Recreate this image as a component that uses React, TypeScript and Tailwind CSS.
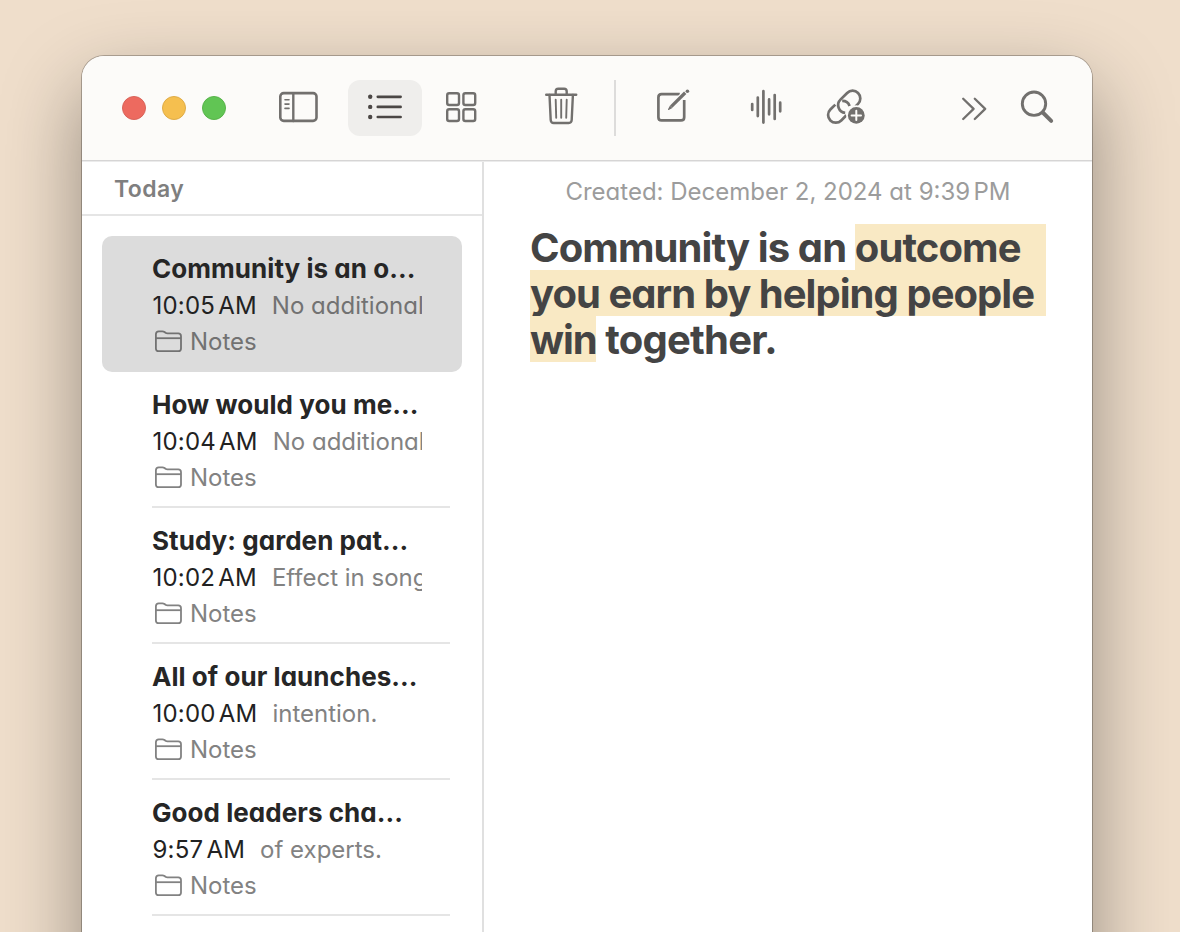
import { clsx } from "clsx"

interface Note {
  title: string
  time: string
  preview: string
}

const notes: Note[] = [
  { title: "Community is an o...", time: "10:05 AM", preview: "No additional text" },
  { title: "How would you me...", time: "10:04 AM", preview: "No additional text" },
  { title: "Study: garden pat...", time: "10:02 AM", preview: "Effect in songs" },
  { title: "All of our launches...", time: "10:00 AM", preview: "intention." },
  { title: "Good leaders cha...", time: "9:57 AM", preview: "of experts." },
]

function SidebarIcon() {
  return (
    <svg width="40" height="40" viewBox="0 0 40 40" fill="none" stroke="currentColor" strokeLinecap="round">
      <rect x="2.3" y="6.1" width="36.2" height="27.8" rx="3.4" strokeWidth="2.6" />
      <path d="M15.3 6.5V34" strokeWidth="2.4" />
      <path d="M7 12.8h4M7 17.1h4M7 21.4h4" strokeWidth="1.6" />
    </svg>
  )
}

function ListIcon() {
  return (
    <svg width="40" height="40" viewBox="0 0 40 40" fill="currentColor">
      <circle cx="5.2" cy="9.8" r="2.2" />
      <circle cx="5.2" cy="19.9" r="2.2" />
      <circle cx="5.2" cy="30" r="2.2" />
      <path d="M12.8 9.8h22.8M12.8 19.9h22.8M12.8 30h22.8" stroke="currentColor" strokeWidth="2.7" strokeLinecap="round" />
    </svg>
  )
}

function GridIcon() {
  return (
    <svg width="40" height="40" viewBox="0 0 40 40" fill="none" stroke="currentColor" strokeWidth="2.4">
      <rect x="6.2" y="6.2" width="11.8" height="11.8" rx="2" />
      <rect x="22.4" y="6.2" width="11.8" height="11.8" rx="2" />
      <rect x="6.2" y="22.2" width="11.8" height="11.8" rx="2" />
      <rect x="22.4" y="22.2" width="11.8" height="11.8" rx="2" />
    </svg>
  )
}

function TrashIcon() {
  return (
    <svg width="40" height="40" viewBox="0 0 40 40" fill="none" stroke="currentColor" strokeLinecap="round" strokeLinejoin="round">
      <path d="M5.2 7.7h30" strokeWidth="2.4" />
      <path d="M14.7 7.4v-3q0-2.6 2.6-2.6h5.8q2.6 0 2.6 2.6v3" strokeWidth="2.4" />
      <path d="M8.5 8l1.2 25q.2 3 3 3h15q2.8 0 3-3l1.2-25" strokeWidth="2.4" />
      <path d="M14.7 12.8l.5 18M20.2 12.8v18M25.7 12.8l-.5 18" strokeWidth="1.9" />
    </svg>
  )
}

function ComposeIcon() {
  return (
    <svg width="40" height="40" viewBox="0 0 40 40" fill="none" stroke="currentColor" strokeLinecap="butt" strokeLinejoin="round">
      <path d="M26.8 7.2H8.6q-3.2 0-3.2 3.2v19.8q0 3.2 3.2 3.2h19.4q3.2 0 3.2-3.2V13" strokeWidth="2.7" />
      <path d="M32.6 5.4L18.2 19.6" strokeWidth="5.6" stroke="#fcfbf9" />
      <path d="M32.2 5.8L18.2 19.6" strokeWidth="3.3" />
      <path d="M17 18.5l-2 3.7q-.2.9.7.7l3.7-2z" fill="currentColor" stroke="none" />
      <circle cx="34.4" cy="4.3" r="1.8" fill="currentColor" stroke="none" />
    </svg>
  )
}

function WaveformIcon() {
  return (
    <svg width="40" height="40" viewBox="0 0 40 40" fill="none" stroke="currentColor" strokeWidth="2.7" strokeLinecap="round">
      <path d="M6.2 17v6M11.8 10.5v18.6M17.4 4.2v31.4M23.1 12.4v14.9M28.7 8v23.9M34.2 15.7v8.6" />
    </svg>
  )
}

function LinkIcon() {
  return (
    <svg width="44" height="40" viewBox="0 0 44 40" fill="none" stroke="currentColor" strokeWidth="2.7" strokeLinecap="butt">
      <path d="M10.3 17.6L5.35 22.55A7.7 7.7 0 0 0 16.25 33.45L21.4 28.3" />
      <path d="M20.2 25.8A7.7 7.7 0 0 1 15.45 12.65L22.15 5.95A7.7 7.7 0 0 1 33.05 16.85L30.5 19.4" />
      <path d="M17.2 13.9A7.7 7.7 0 0 1 24.6 19" />
      <circle cx="31.3" cy="28.4" r="10.2" fill="#fcfbf9" stroke="none" />
      <circle cx="31.3" cy="28.4" r="8.4" fill="currentColor" stroke="none" />
      <path d="M31.3 23.7v9.4M26.6 28.4h9.4" stroke="#fcfbf9" strokeWidth="2" strokeLinecap="round" />
    </svg>
  )
}

function ChevronsIcon() {
  return (
    <svg width="32" height="32" viewBox="0 0 32 32" fill="none" stroke="currentColor" strokeWidth="2.3" strokeLinecap="round" strokeLinejoin="round">
      <path d="M5.2 5.8L15.6 15.9L5.2 26M16.8 5.8L27.2 15.9L16.8 26" />
    </svg>
  )
}

function SearchIcon() {
  return (
    <svg width="40" height="40" viewBox="0 0 40 40" fill="none" stroke="currentColor" strokeLinecap="round">
      <circle cx="17" cy="16.7" r="11.7" strokeWidth="2.9" />
      <path d="M25.8 25.5l8.4 8.4" strokeWidth="3.9" />
    </svg>
  )
}

function FolderIcon() {
  return (
    <svg width="28" height="24" viewBox="0 0 28 24" fill="none" stroke="currentColor" strokeWidth="1.8" strokeLinejoin="round">
      <path d="M.9 4.2q0-2.9 2.9-2.9h3.6q1.2 0 2.1.7l1 .8q.8.6 2 .6h10.7q2.8 0 2.8 2.8v12.2q0 2.8-2.8 2.8H3.7q-2.8 0-2.8-2.8z" />
      <path d="M.9 8.2h25.1" />
    </svg>
  )
}

function Toolbar() {
  return (
    <header className="flex h-[105px] shrink-0 items-start border-b border-[#d6d5d5] bg-[#fcfbf9] pt-6 text-[#72706e]">
      <div className="ml-10 flex h-14 items-center gap-4">
        <span className="size-6 rounded-full border border-[#d9645a] bg-[#ed6a5f]" />
        <span className="size-6 rounded-full border border-[#dfac48] bg-[#f5bf4f]" />
        <span className="size-6 rounded-full border border-[#58b44a] bg-[#61c554]" />
      </div>
      <div className="ml-[52px] flex h-[54px] items-center">
        <SidebarIcon />
      </div>
      <div className="ml-[30px] flex h-14 w-[74px] items-start justify-center rounded-xl bg-[#efeeec] pt-[7px] text-[#4b4745]">
        <ListIcon />
      </div>
      <div className="ml-[19px] flex h-[54px] items-center">
        <GridIcon />
      </div>
      <div className="ml-[60px] flex h-[54px] items-center">
        <TrashIcon />
      </div>
      <span className="ml-[33px] h-14 w-0.5 bg-[#dddcdb]" />
      <div className="ml-[37px] flex h-[54px] items-center">
        <ComposeIcon />
      </div>
      <div className="ml-[53px] flex h-[54px] items-center">
        <WaveformIcon />
      </div>
      <div className="ml-[39px] flex h-[54px] items-center">
        <LinkIcon />
      </div>
      <div className="ml-[89px] flex h-[57px] items-center">
        <ChevronsIcon />
      </div>
      <div className="ml-[27px] flex h-[54px] items-center">
        <SearchIcon />
      </div>
    </header>
  )
}

function NoteRow({ note, selected }: { note: Note; selected: boolean }) {
  return (
    <li
      className={clsx(
        "relative h-[136px] pt-[15px] pl-[50px]",
        selected ? "rounded-[10px] bg-[#dcdcdc] text-[#727272]" : "text-[#828282]"
      )}
    >
      <h3 className="h-9 text-[26px] leading-9 font-bold tracking-[0.05px] whitespace-nowrap text-[#262626]">{note.title}</h3>
      <p className="flex h-[37px] w-[270px] overflow-hidden text-[24px] leading-[37px] whitespace-nowrap">
        <span className="mr-[15px] pl-[0.5px] tracking-[0.2px] [word-spacing:-3.8px] text-[#222]">{note.time}</span>
        <span>{note.preview}</span>
      </p>
      <div className="flex h-9 items-center pl-[3px] text-[24px] leading-9">
        <FolderIcon />
        <span className="ml-[7px]">Notes</span>
      </div>
      {!selected && <span className="absolute right-3 bottom-0 left-[50px] h-0.5 bg-[#e5e5e5]" />}
    </li>
  )
}

export default function App() {
  return (
    <div className="h-[932px] w-[1180px] overflow-hidden bg-[#efdecb] px-[82px] pt-14 font-['Inter',sans-serif] [font-feature-settings:'cv11']">
      <div className="flex h-[1100px] w-[1010px] flex-col overflow-hidden rounded-[22px] bg-white shadow-[0_0_0_1px_rgba(0,0,0,0.25),0_32px_80px_rgba(0,0,0,0.38)]">
        <Toolbar />
        <div className="flex flex-1 border-t border-[#ebebeb]">
          <aside className="w-[402px] border-r-2 border-[#e0e0e0]">
            <div className="h-[54px] border-b-2 border-[#e5e5e5] pl-8 text-[23px] leading-[55px] font-semibold tracking-[0.4px] text-[#7f7f7f] [font-feature-settings:normal]">
              Today
            </div>
            <ul className="px-5 pt-5">
              {notes.map((note, i) => (
                <NoteRow key={note.title} note={note} selected={i === 0} />
              ))}
            </ul>
          </aside>
          <main className="flex-1">
            <p className="pt-[11px] text-center text-[24px] leading-[38px] text-[#9c9c9c]">
              Created: December 2, 2024 at <span className="[word-spacing:-3.4px]">9:39 PM</span>
            </p>
            <h1 className="mt-[13px] ml-[46px] w-[516px] text-[40px] leading-[46px] font-bold tracking-[-0.9px] text-[#444]">
              <span className="flex h-[46px]">
                <span className="pt-px whitespace-pre">Community is an </span>
                <span className="flex-1 bg-[#f9e9c4] pt-px">outcome</span>
              </span>
              <span className="block h-[46px] bg-[#f9e9c4] pt-px tracking-[-0.96px] whitespace-nowrap">
                you earn by helping people
              </span>
              <span className="flex h-[46px]">
                <span className="bg-[#f9e9c4] pt-px tracking-[-1.1px]">win</span>
                <span className="pt-px tracking-[-0.75px] whitespace-pre"> together.</span>
              </span>
            </h1>
          </main>
        </div>
      </div>
    </div>
  )
}
